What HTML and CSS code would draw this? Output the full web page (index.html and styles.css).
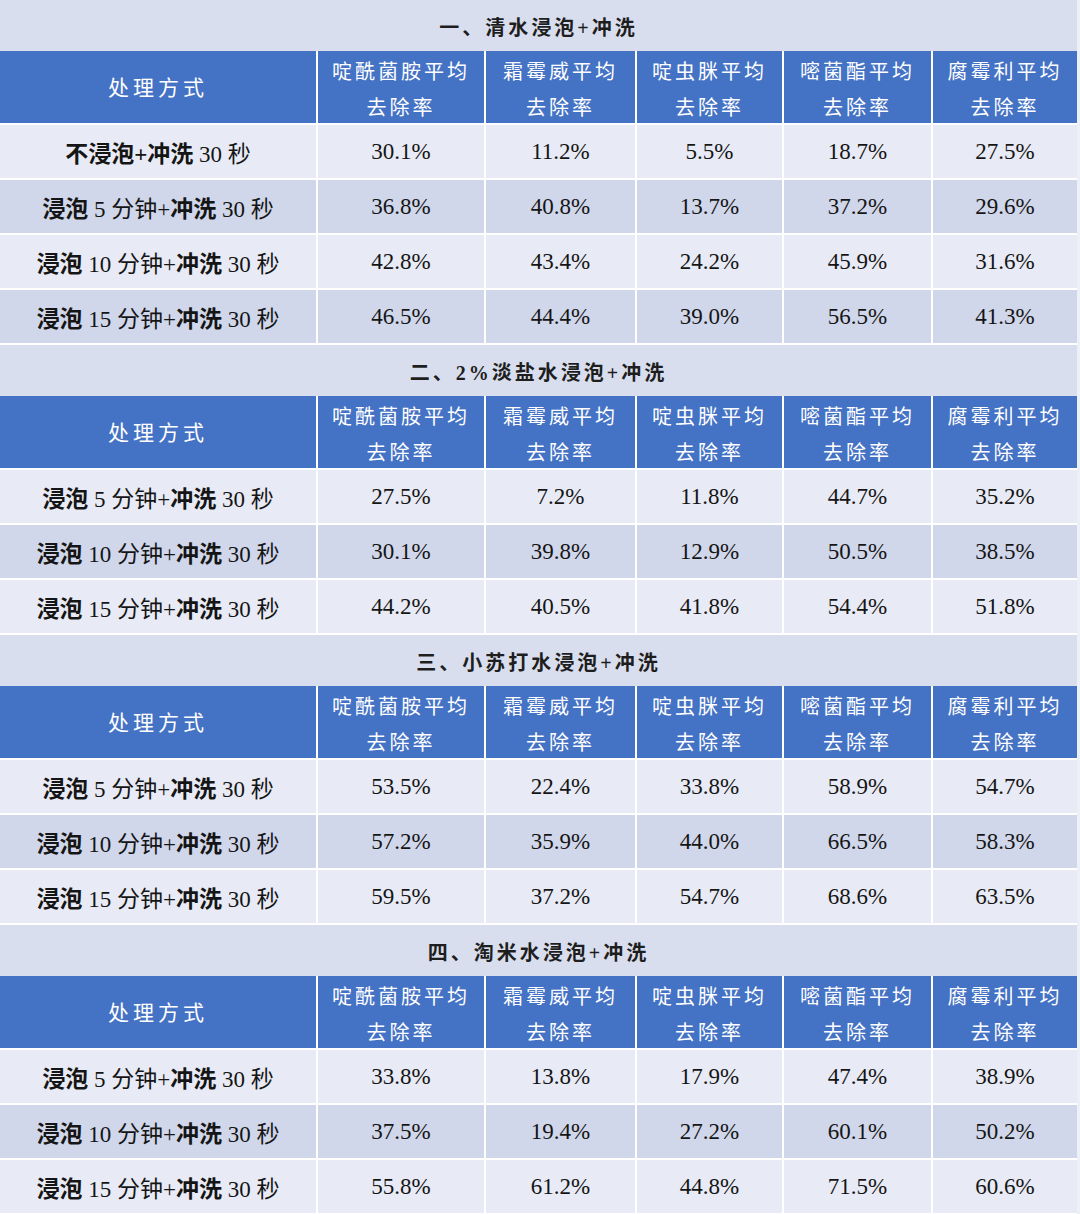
FILE: index.html
```html
<!DOCTYPE html>
<html lang="zh-CN">
<head>
<meta charset="utf-8">
<title>果蔬农药去除率</title>
<link rel="stylesheet" href="styles.css">
</head>
<body>
<div class="sheet">

  <section class="block">
    <div class="title">一、清水浸泡+冲洗</div>
    <div class="grid">
      <div class="row head">
        <div class="c first">处理方式</div>
        <div class="c">啶酰菌胺平均<br>去除率</div>
        <div class="c">霜霉威平均<br>去除率</div>
        <div class="c">啶虫脒平均<br>去除率</div>
        <div class="c">嘧菌酯平均<br>去除率</div>
        <div class="c">腐霉利平均<br>去除率</div>
      </div>
      <div class="row">
        <div class="c first"><span><b>不浸泡+冲洗</b> 30 秒</span></div>
        <div class="c">30.1%</div><div class="c">11.2%</div><div class="c">5.5%</div><div class="c">18.7%</div><div class="c">27.5%</div>
      </div>
      <div class="row alt">
        <div class="c first"><span><b>浸泡</b> 5 分钟+<b>冲洗</b> 30 秒</span></div>
        <div class="c">36.8%</div><div class="c">40.8%</div><div class="c">13.7%</div><div class="c">37.2%</div><div class="c">29.6%</div>
      </div>
      <div class="row">
        <div class="c first"><span><b>浸泡</b> 10 分钟+<b>冲洗</b> 30 秒</span></div>
        <div class="c">42.8%</div><div class="c">43.4%</div><div class="c">24.2%</div><div class="c">45.9%</div><div class="c">31.6%</div>
      </div>
      <div class="row alt">
        <div class="c first"><span><b>浸泡</b> 15 分钟+<b>冲洗</b> 30 秒</span></div>
        <div class="c">46.5%</div><div class="c">44.4%</div><div class="c">39.0%</div><div class="c">56.5%</div><div class="c">41.3%</div>
      </div>
    </div>
  </section>

  <section class="block">
    <div class="title">二、2%淡盐水浸泡+冲洗</div>
    <div class="grid">
      <div class="row head">
        <div class="c first">处理方式</div>
        <div class="c">啶酰菌胺平均<br>去除率</div>
        <div class="c">霜霉威平均<br>去除率</div>
        <div class="c">啶虫脒平均<br>去除率</div>
        <div class="c">嘧菌酯平均<br>去除率</div>
        <div class="c">腐霉利平均<br>去除率</div>
      </div>
      <div class="row">
        <div class="c first"><span><b>浸泡</b> 5 分钟+<b>冲洗</b> 30 秒</span></div>
        <div class="c">27.5%</div><div class="c">7.2%</div><div class="c">11.8%</div><div class="c">44.7%</div><div class="c">35.2%</div>
      </div>
      <div class="row alt">
        <div class="c first"><span><b>浸泡</b> 10 分钟+<b>冲洗</b> 30 秒</span></div>
        <div class="c">30.1%</div><div class="c">39.8%</div><div class="c">12.9%</div><div class="c">50.5%</div><div class="c">38.5%</div>
      </div>
      <div class="row">
        <div class="c first"><span><b>浸泡</b> 15 分钟+<b>冲洗</b> 30 秒</span></div>
        <div class="c">44.2%</div><div class="c">40.5%</div><div class="c">41.8%</div><div class="c">54.4%</div><div class="c">51.8%</div>
      </div>
    </div>
  </section>

  <section class="block">
    <div class="title">三、小苏打水浸泡+冲洗</div>
    <div class="grid">
      <div class="row head">
        <div class="c first">处理方式</div>
        <div class="c">啶酰菌胺平均<br>去除率</div>
        <div class="c">霜霉威平均<br>去除率</div>
        <div class="c">啶虫脒平均<br>去除率</div>
        <div class="c">嘧菌酯平均<br>去除率</div>
        <div class="c">腐霉利平均<br>去除率</div>
      </div>
      <div class="row">
        <div class="c first"><span><b>浸泡</b> 5 分钟+<b>冲洗</b> 30 秒</span></div>
        <div class="c">53.5%</div><div class="c">22.4%</div><div class="c">33.8%</div><div class="c">58.9%</div><div class="c">54.7%</div>
      </div>
      <div class="row alt">
        <div class="c first"><span><b>浸泡</b> 10 分钟+<b>冲洗</b> 30 秒</span></div>
        <div class="c">57.2%</div><div class="c">35.9%</div><div class="c">44.0%</div><div class="c">66.5%</div><div class="c">58.3%</div>
      </div>
      <div class="row">
        <div class="c first"><span><b>浸泡</b> 15 分钟+<b>冲洗</b> 30 秒</span></div>
        <div class="c">59.5%</div><div class="c">37.2%</div><div class="c">54.7%</div><div class="c">68.6%</div><div class="c">63.5%</div>
      </div>
    </div>
  </section>

  <section class="block">
    <div class="title">四、淘米水浸泡+冲洗</div>
    <div class="grid">
      <div class="row head">
        <div class="c first">处理方式</div>
        <div class="c">啶酰菌胺平均<br>去除率</div>
        <div class="c">霜霉威平均<br>去除率</div>
        <div class="c">啶虫脒平均<br>去除率</div>
        <div class="c">嘧菌酯平均<br>去除率</div>
        <div class="c">腐霉利平均<br>去除率</div>
      </div>
      <div class="row">
        <div class="c first"><span><b>浸泡</b> 5 分钟+<b>冲洗</b> 30 秒</span></div>
        <div class="c">33.8%</div><div class="c">13.8%</div><div class="c">17.9%</div><div class="c">47.4%</div><div class="c">38.9%</div>
      </div>
      <div class="row alt">
        <div class="c first"><span><b>浸泡</b> 10 分钟+<b>冲洗</b> 30 秒</span></div>
        <div class="c">37.5%</div><div class="c">19.4%</div><div class="c">27.2%</div><div class="c">60.1%</div><div class="c">50.2%</div>
      </div>
      <div class="row">
        <div class="c first"><span><b>浸泡</b> 15 分钟+<b>冲洗</b> 30 秒</span></div>
        <div class="c">55.8%</div><div class="c">61.2%</div><div class="c">44.8%</div><div class="c">71.5%</div><div class="c">60.6%</div>
      </div>
    </div>
  </section>

</div>
</body>
</html>
```

FILE: styles.css
```css
html, body {
  margin: 0;
  padding: 0;
  background: #eef0f8;
}

body {
  font-family: "Liberation Serif", "Noto Sans CJK SC", serif;
  color: #151515;
}

.sheet {
  width: 1077px;
  display: flex;
  flex-direction: column;
}

.block {
  display: flex;
  flex-direction: column;
  border-bottom: 2px solid #ffffff;
}

.title {
  height: 51px;
  background: #d9deef;
  display: flex;
  align-items: center;
  justify-content: center;
  font-size: 20px;
  font-weight: 700;
  letter-spacing: 3px;
  color: #1e1e1e;
  padding-top: 2px;
  box-sizing: border-box;
}

.grid {
  display: grid;
  grid-template-columns: 316px 166px 149px 145px 147px 144px;
  grid-auto-rows: 53px;
  grid-template-rows: 72px;
  column-gap: 2px;
  row-gap: 2px;
  background: #ffffff;
}

.row {
  display: contents;
}

.c {
  display: flex;
  align-items: center;
  justify-content: center;
  text-align: center;
  font-size: 23px;
  background: #e8ebf5;
  white-space: nowrap;
}

.row.alt .c {
  background: #d0d7eb;
}

.c b {
  font-weight: 700;
}

.row.head .c {
  background: #4472c4;
  color: #ffffff;
  font-size: 20px;
  letter-spacing: 3px;
  line-height: 36px;
  font-weight: 400;
  padding-top: 6px;
  box-sizing: border-box;
}

.row.head .c.first {
  letter-spacing: 4px;
  font-size: 21px;
  padding-top: 2px;
}
```
